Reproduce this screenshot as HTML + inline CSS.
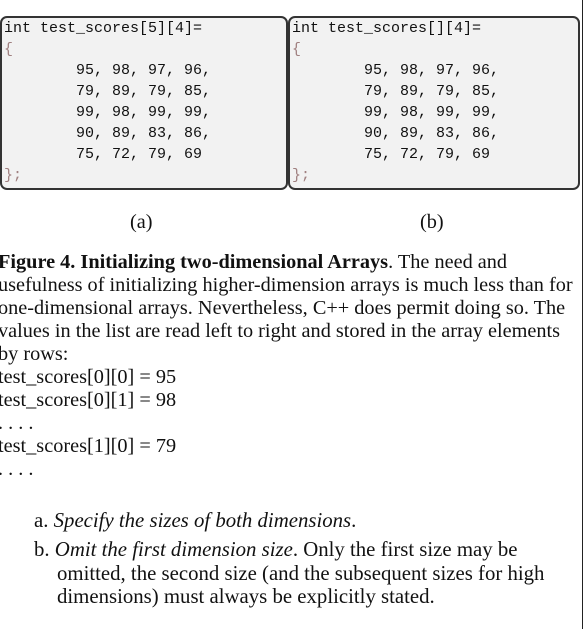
<!DOCTYPE html>
<html><head><style>
body{margin:0;width:584px;height:629px;background:#fff;position:relative;overflow:hidden;font-family:"Liberation Serif",serif;color:#111}
.box{position:absolute;top:16px;height:174px;background:#f2f2f2;border:2px solid #333;border-radius:7px;box-sizing:border-box}
.code{position:absolute;font-family:"Liberation Mono",monospace;font-size:15px;line-height:21px;white-space:pre;color:#111;top:0px;left:2px}
.p{color:#a08080}
.t{position:absolute;white-space:nowrap;font-size:20.3px;line-height:23px;left:-2px}
.l{font-size:20.8px}
</style></head><body>
<div class="box" style="left:0;width:288px"><div class="code">int test_scores[5][4]=
<span class="p">{</span>
        95, 98, 97, 96,
        79, 89, 79, 85,
        99, 98, 99, 99,
        90, 89, 83, 86,
        75, 72, 79, 69
<span class="p">};</span></div></div>
<div class="box" style="left:288px;width:292px"><div class="code">int test_scores[][4]=
<span class="p">{</span>
        95, 98, 97, 96,
        79, 89, 79, 85,
        99, 98, 99, 99,
        90, 89, 83, 86,
        75, 72, 79, 69
<span class="p">};</span></div></div>
<div style="position:absolute;left:582px;top:0;width:1px;height:629px;background:#222"></div>
<div class="t" style="left:130px;top:211px">(a)</div>
<div class="t" style="left:420px;top:211px">(b)</div>
<div class="t" style="top:251px"><b>Figure 4. Initializing two-dimensional Arrays</b>. The need and</div>
<div class="t" style="top:274px">usefulness of initializing higher-dimension arrays is much less than for</div>
<div class="t" style="top:297px">one-dimensional arrays. Nevertheless, C++ does permit doing so. The</div>
<div class="t" style="top:320px">values in the list are read left to right and stored in the array elements</div>
<div class="t" style="top:343px">by rows:</div>
<div class="t" style="top:366px">test_scores[0][0] = 95</div>
<div class="t" style="top:389px">test_scores[0][1] = 98</div>
<div class="t" style="top:412px">. . . .</div>
<div class="t" style="top:435px">test_scores[1][0] = 79</div>
<div class="t" style="top:458px">. . . .</div>
<div class="t l" style="left:34px;top:509px">a. <i>Specify the sizes of both dimensions</i>.</div>
<div class="t l" style="left:34px;top:538px">b. <i>Omit the first dimension size</i>. Only the first size may be</div>
<div class="t l" style="left:57px;top:562px">omitted, the second size (and the subsequent sizes for high</div>
<div class="t l" style="left:57px;top:585px">dimensions) must always be explicitly stated.</div>
</body></html>
